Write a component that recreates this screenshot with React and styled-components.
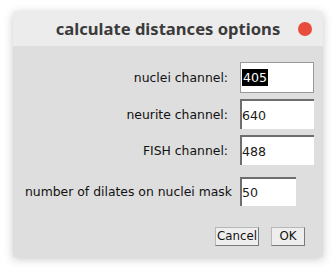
import React from 'react';
import styled, { createGlobalStyle } from 'styled-components';

const GlobalStyle = createGlobalStyle`
  html, body {
    margin: 0;
    padding: 0;
    background: #ffffff;
  }
`;

const Page = styled.div`
  width: 336px;
  height: 272px;
  padding: 11px 13px 0;
  box-sizing: border-box;
`;

const Window = styled.div`
  width: 310px;
  height: 246px;
  display: flex;
  flex-direction: column;
  border-radius: 3px 3px 0 0;
  overflow: hidden;
  box-shadow: 0 2px 10px rgba(0, 0, 0, 0.22);
`;

const TitleBar = styled.div`
  height: 35px;
  background: #ececec;
  display: flex;
  align-items: center;
  justify-content: center;
  position: relative;
  span {
    font-family: 'Noto Sans', 'DejaVu Sans', sans-serif;
    font-weight: 700;
    font-size: 16.6px;
    color: #3b3b3b;
    margin-top: -1px;
  }
`;

const CloseDot = styled.div`
  position: absolute;
  right: 11px;
  top: 11px;
  width: 14px;
  height: 14px;
  border-radius: 50%;
  background: #e74c3c;
`;

const Body = styled.div`
  flex: 1;
  background: #dedede;
  padding: 16px 0 0 11px;
  font-family: 'DejaVu Sans', sans-serif;
  font-size: 12.4px;
  color: #111;
`;

const Row = styled.div`
  display: grid;
  grid-template-columns: 216px auto;
  align-items: center;
  margin-bottom: ${(p) => p.$gap}px;
`;

const Label = styled.label`
  text-align: right;
  padding-right: ${(p) => p.$pad}px;
  white-space: nowrap;
`;

const Field = styled.div`
  width: ${(p) => p.$w}px;
  height: ${(p) => p.$h}px;
  box-sizing: border-box;
  background: #ffffff;
  border-style: solid;
  border-width: 2px 0 0 2px;
  border-color: #6e6e6e;
  display: flex;
  align-items: center;
  font-size: 12.6px;
  color: #1a1a1a;
  ${(p) =>
    p.$focused &&
    `
    border: 1px solid #9a9a9a;
    padding-left: 1px;
  `}
`;

const Selected = styled.span`
  background: #000;
  color: #fff;
  padding: 1px;
`;

const Buttons = styled.div`
  display: flex;
  justify-content: flex-end;
  gap: 12px;
  padding-right: 18px;
`;

const Button = styled.button`
  width: ${(p) => p.$w}px;
  height: 19px;
  padding: 0;
  box-sizing: border-box;
  background: #eeeeee;
  border: 1px solid;
  border-color: #b8b8b8 #7a7a7a #7a7a7a #b8b8b8;
  font-family: 'DejaVu Sans', sans-serif;
  font-size: 11.8px;
  color: #111;
  line-height: 17px;
`;

export default function App() {
  return (
    <>
      <GlobalStyle />
      <Page>
        <Window>
          <TitleBar>
            <span>calculate distances options</span>
            <CloseDot />
          </TitleBar>
          <Body>
            <Row $gap={6}>
              <Label $pad={12}>nuclei channel:</Label>
              <Field $w={74} $h={31} $focused>
                <Selected>405</Selected>
              </Field>
            </Row>
            <Row $gap={6}>
              <Label $pad={12}>neurite channel:</Label>
              <Field $w={74} $h={30}>640</Field>
            </Row>
            <Row $gap={12}>
              <Label $pad={12}>FISH channel:</Label>
              <Field $w={74} $h={30}>488</Field>
            </Row>
            <Row $gap={21}>
              <Label $pad={8}>number of dilates on nuclei mask</Label>
              <Field $w={56} $h={29}>50</Field>
            </Row>
            <Buttons>
              <Button $w={44}>Cancel</Button>
              <Button $w={34}>OK</Button>
            </Buttons>
          </Body>
        </Window>
      </Page>
    </>
  );
}
